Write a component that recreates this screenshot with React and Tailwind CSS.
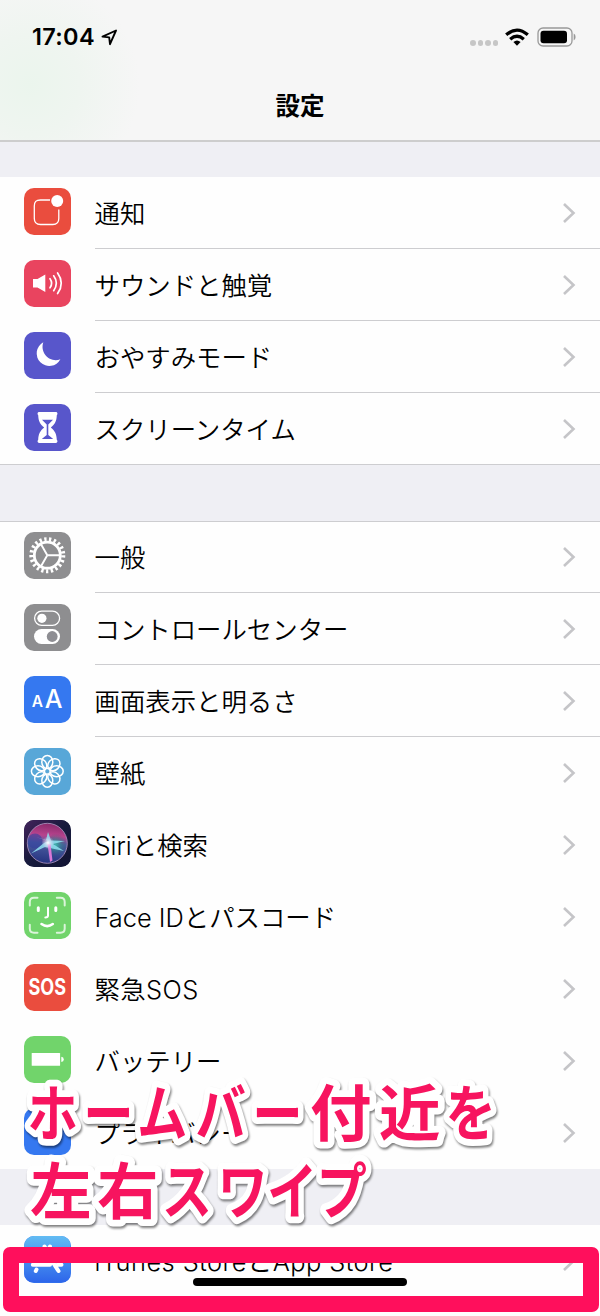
import React from "react";

const NotificationIcon = () => (
    <>
        <path d="M26 12H16.5C12 12 10.3 13.7 10.3 18V30.5C10.3 34.8 12 36.5 16.5 36.5H28.8C33.1 36.5 34.8 34.8 34.8 30.5V21.5" fill="none" stroke="#fff" strokeWidth="1.3" />
        <circle cx="33.2" cy="13" r="6" fill="#fff" />
    </>
);

const SoundIcon = () => (
    <>
        <path d="M9 19H13.5L21.3 14.5V32L13.5 27.4H9Z" fill="#fff" />
        <g fill="none" stroke="#fff" strokeWidth="1.7" strokeLinecap="round">
            <path d="M26 18.7Q29.3 23.2 26 27.8" />
            <path d="M29.7 15.8Q35 23.2 29.7 30.7" />
            <path d="M33.6 12.9Q41 23.2 33.6 33.6" />
        </g>
    </>
);

const MoonIcon = () => (
    <path d="M19.3 10.3A12.6 12.6 0 1 0 36.4 27.3C26.5 31.3 15.5 21.5 19.3 10.3Z" fill="#fff" />
);

const HourglassIcon = () => (
    <>
        <path d="M15 8H32C33.5 8 34 10.2 32.8 11.2C32.6 17 31 20 26.8 23.5C31 27 32.6 30 32.8 35.8C34 36.8 33.5 39 32 39H15C13.5 39 13 36.8 14.2 35.8C14.4 30 16 27 20.2 23.5C16 20 14.4 17 14.2 11.2C13 10.2 13.5 8 15 8Z" fill="#fff" />
        <path d="M18 15.8H29L24.3 20.5V31L29.2 35H17.8L22.7 31V20.5Z" fill="#5856cb" />
    </>
);

const GearIcon = () => (
    <g stroke="#fff" fill="none">
        <circle cx="23.3" cy="23.2" r="16" strokeWidth="4" strokeDasharray="2.3 2.49" />
        <circle cx="23.3" cy="23.2" r="13" strokeWidth="2.8" />
        <path d="M23.3 23.2H36M23.3 23.2L17 12.2M23.3 23.2L17 34.2" strokeWidth="1.9" />
    </g>
);

const ControlIcon = () => (
    <>
        <rect x="10.6" y="7.2" width="25" height="14.2" rx="7.1" fill="none" stroke="#fff" strokeWidth="1.3" />
        <circle cx="17.9" cy="14.3" r="4.6" fill="#fff" />
        <rect x="10" y="25" width="26" height="15" rx="7.5" fill="#fff" />
        <circle cx="28.2" cy="32.5" r="5.4" fill="#8e8e93" />
    </>
);

const DisplayIcon = () => (
    <g fill="#fff" fontFamily="Inter, sans-serif">
        <text x="7.8" y="30.8" fontSize="15.5" fontWeight="600">A</text>
        <text x="20.8" y="31.6" fontSize="25" fontWeight="500">A</text>
    </g>
);

const WallpaperIcon = () => (
    <g fill="none" stroke="#fff" strokeWidth="1.5">
        {[0, 45, 90, 135, 180, 225, 270, 315].map((a) => (
            <ellipse key={a} cx="23.3" cy="14" rx="5.5" ry="6.6" transform={`rotate(${a} 23.3 23.3)`} />
        ))}
    </g>
);

const SiriIcon = () => (
    <>
        <defs>
            <linearGradient id="siriBg" x1="0" y1="0" x2="1" y2="1">
                <stop offset="0" stopColor="#43245c" />
                <stop offset="0.5" stopColor="#171a3c" />
                <stop offset="1" stopColor="#111332" />
            </linearGradient>
            <linearGradient id="siriOrb" x1="0.5" y1="0" x2="0.4" y2="1">
                <stop offset="0" stopColor="#8a2a6c" />
                <stop offset="0.3" stopColor="#b8448e" />
                <stop offset="0.5" stopColor="#4b5da0" />
                <stop offset="1" stopColor="#25327f" />
            </linearGradient>
            <radialGradient id="siriTeal">
                <stop offset="0" stopColor="#3fb6ae" />
                <stop offset="1" stopColor="#24576c" stopOpacity="0" />
            </radialGradient>
            <radialGradient id="siriGlow">
                <stop offset="0" stopColor="#fff" />
                <stop offset="1" stopColor="#d8c4f0" stopOpacity="0" />
            </radialGradient>
        </defs>
        <rect width="46.5" height="46.5" fill="url(#siriBg)" />
        <circle cx="23.3" cy="23.3" r="20" fill="url(#siriOrb)" stroke="#a58cb8" strokeWidth="0.9" />
        <circle cx="31.5" cy="25" r="11.5" fill="url(#siriTeal)" />
        <circle cx="11" cy="21" r="7.5" fill="#34419f" opacity="0.6" />
        <path d="M24 21L20 23L7 33.5L21 27L40 31L29 24L41 21L27 20.5L24 12L22 20L12 17Z" fill="#8fe0f0" opacity="0.85" />
        <path d="M23.5 24L26 42L28.5 40.5L26.5 24Z" fill="#d978d6" />
        <circle cx="24" cy="22.8" r="6.5" fill="url(#siriGlow)" />
    </>
);

const FaceIcon = () => (
    <g fill="none" stroke="#fff" strokeWidth="2" strokeLinecap="round">
        <path d="M5.8 13.5V10Q5.8 5.8 10 5.8H13.5M32.8 5.8H36.5Q40.7 5.8 40.7 10V13.5M40.7 32.8V36.5Q40.7 40.7 36.5 40.7H32.8M13.5 40.7H10Q5.8 40.7 5.8 36.5V32.8" opacity="0.75" />
        <path d="M14.3 15.8V18.5M31.8 15.8V18.5" strokeWidth="3" />
        <path d="M24 15.8V23.5Q24 25.5 21.3 25.5" />
        <path d="M17.5 32Q23.2 36.2 28.8 32" strokeWidth="2.6" />
    </g>
);

const SosIcon = () => (
    <text x="4.4" y="31.2" fontSize="22.5" fontWeight="700" fontFamily="Inter, sans-serif" fill="#fff" textLength="37.6" lengthAdjust="spacingAndGlyphs">SOS</text>
);

const BatteryIcon = () => (
    <>
        <rect x="7.7" y="17" width="28.4" height="12.8" rx="0.6" fill="#fff" />
        <path d="M37.3 20.8Q39.8 21 39.8 23.4T37.3 26Z" fill="#fff" />
    </>
);

const PrivacyIcon = () => (
    <path d="M14 23V15a2 2 0 0 1 4 0V10a2 2 0 0 1 4 0V9a2 2 0 0 1 4 0V11a2 2 0 0 1 4 0V24L28 28H18Z" fill="#fff" />
);

const StoreIcon = () => (
    <>
        <defs>
            <linearGradient id="storeBg" x1="0" y1="0" x2="0" y2="1">
                <stop offset="0" stopColor="#62bcf3" />
                <stop offset="1" stopColor="#2d65ea" />
            </linearGradient>
        </defs>
        <rect width="46.5" height="46.5" fill="url(#storeBg)" />
        <g stroke="#fff" strokeWidth="4" strokeLinecap="round" fill="none">
            <path d="M20.5 10.5L22.5 14M26 10.5L16 27.5M12.5 33.5L11.8 35M8.8 28.8H26M24.5 19.5L34.5 35M33.5 28.8H37.5" />
        </g>
    </>
);

const groupOne = [
    { label: "通知", bg: "bg-[#ea4d3e]", icon: <NotificationIcon /> },
    { label: "サウンドと触覚", bg: "bg-[#e9445f]", icon: <SoundIcon /> },
    { label: "おやすみモード", bg: "bg-[#5856cb]", icon: <MoonIcon /> },
    { label: "スクリーンタイム", bg: "bg-[#5856cb]", icon: <HourglassIcon /> },
];

const groupTwo = [
    { label: "一般", bg: "bg-[#8e8e90]", icon: <GearIcon />, line: true },
    { label: "コントロールセンター", bg: "bg-[#8e8e90]", icon: <ControlIcon />, line: true },
    { label: "画面表示と明るさ", bg: "bg-[#3578f0]", icon: <DisplayIcon />, line: true },
    { label: "壁紙", bg: "bg-[#58a7d8]", icon: <WallpaperIcon /> },
    { label: "Siriと検索", bg: "bg-[#171a3c]", icon: <SiriIcon /> },
    { label: "Face IDとパスコード", bg: "bg-[#71d46b]", icon: <FaceIcon /> },
    { label: "緊急SOS", bg: "bg-[#ea4d3e]", icon: <SosIcon />, tracking: "tracking-[0.4px]" },
    { label: "バッテリー", bg: "bg-[#71d46b]", icon: <BatteryIcon /> },
    { label: "プライバシー", bg: "bg-[#3578f0]", icon: <PrivacyIcon /> },
];

const Row = ({ label, bg, icon, line, tracking = "" }) => (
    <div className="flex h-[72px] pl-6">
        <div className={`mt-[11px] h-[46.5px] w-[46.5px] shrink-0 overflow-hidden rounded-[10px] ${bg}`}>
            <svg viewBox="0 0 46.5 46.5" className="h-full w-full">{icon}</svg>
        </div>
        <div className={`ml-6 flex flex-1 items-center justify-between border-b pr-6 ${line ? "border-[#cdcdd0]" : "border-transparent"}`}>
            <span className={`whitespace-nowrap pt-[3px] text-[25.4px] leading-none font-[350] ${tracking}`}>{label}</span>
            <svg viewBox="0 0 14 22" className="h-[22px] w-[14px]">
                <path d="M2 2L11.5 11L2 20" fill="none" stroke="#c5c5c8" strokeWidth="2.6" />
            </svg>
        </div>
    </div>
);

// kana are condensed to 82%, kanji keep their full width
const Annotation = () => (
    <svg viewBox="0 0 520 170" className="absolute top-[1070px] left-0 h-[170px] w-[520px] overflow-visible font-['Noto_Sans_CJK_JP',sans-serif] text-[61.5px] font-bold [font-feature-settings:'palt'] [paint-order:stroke_fill] drop-shadow-[1px_2px_1px_rgba(0,0,0,0.5)]">
        <g fill="#f7145f" stroke="#fff" strokeWidth="13.5" strokeLinejoin="round">
            <text transform="scale(0.82 1)" x="33.5 102.4 170 239 308.5" y="66">ホームバー</text>
            <text x="310 379" y="66">付近</text>
            <text transform="scale(0.82 1)" x="544" y="66">を</text>
            <text x="30 97" y="144">左右</text>
            <text transform="scale(0.82 1)" x="200 266.5 327.4 387.8" y="144">スワイプ</text>
        </g>
    </svg>
);

const App = () => {
    return (
        <div lang="ja" className="relative h-[1316px] w-[600px] overflow-hidden bg-[#fefefe] font-['Inter','Noto_Sans_CJK_JP',sans-serif] text-black">
            {/* HEADER */}
            <header className="h-[142px] border-b-2 border-[#cdcdcd] bg-[#f6f6f6] bg-[radial-gradient(circle_at_30px_85px,#ebf5ed_0,#eff5f0_50px,#f6f6f6_110px)]">
                <div className="flex h-[74px] items-center justify-between pr-6 pl-8">
                    <div className="flex items-center gap-1.5">
                        <span className="text-[23.5px] leading-none font-semibold tracking-[0.3px]">17:04</span>
                        <svg viewBox="0 0 17 17" className="h-[17px] w-[17px]">
                            <path d="M1.5 7.6L15 1.5L9 15.2L8.2 8.4Z" fill="none" stroke="#000" strokeWidth="1.9" strokeLinejoin="round" />
                        </svg>
                    </div>
                    <div className="flex items-center">
                        <div className="mt-3 mr-[7px] flex gap-[2px]">
                            {[0, 1, 2, 3].map((i) => (
                                <span key={i} className="h-[5.5px] w-[5.5px] rounded-full bg-[#c6c6c6]" />
                            ))}
                        </div>
                        <svg viewBox="0 0 24 18" className="mr-2 h-[18px] w-6">
                            <g fill="none" stroke="#000" strokeWidth="3.3">
                                <path d="M1.2 6.8Q12 -2.6 22.8 6.8" />
                                <path d="M5.2 11.2Q12 5.3 18.8 11.2" />
                            </g>
                            <path d="M8.4 14.1Q12 11 15.6 14.1L12 17.8Z" />
                        </svg>
                        <svg viewBox="0 0 39 20" className="h-5 w-[39px]">
                            <rect x="1" y="1" width="34" height="18" rx="5" fill="none" stroke="#999" strokeWidth="1.3" />
                            <rect x="3.5" y="3.7" width="26.5" height="12.6" rx="3" />
                            <path d="M36.7 6.6Q38.6 7.5 38.6 10T36.7 13.4Z" fill="#999" />
                        </svg>
                    </div>
                </div>
                <h1 className="mt-[20px] text-center text-[24.5px] leading-[25px] font-bold">設定</h1>
            </header>

            <div className="h-[35px] bg-[#efeff4]" />

            {/* SETTINGS LIST */}
            <section>
                {groupOne.map((item, i) => (
                    <Row key={item.label} {...item} line={i < groupOne.length - 1} />
                ))}
            </section>
            <div className="-mt-px h-[58px] border-y border-[#cdcdd0] bg-[#efeff4]" />
            <section className="-mt-px">
                {groupTwo.map((item) => (
                    <Row key={item.label} {...item} />
                ))}
            </section>
            <div className="h-14 bg-[#efeff4]" />
            <Row label="iTunes StoreとApp Store" bg="bg-[#3578f0]" icon={<StoreIcon />} tracking="tracking-[0.45px]" />

            {/* HOME BAR */}
            <div className="absolute top-[1278px] left-[193px] h-2 w-[214px] rounded-full bg-black" />

            {/* ANNOTATION */}
            <div className="absolute top-[1247px] left-[3px] h-[65px] w-[596px] rounded-[7px] border-[16px] border-[#ff0f5c]" />
            <Annotation />
        </div>
    );
};

export default App;
